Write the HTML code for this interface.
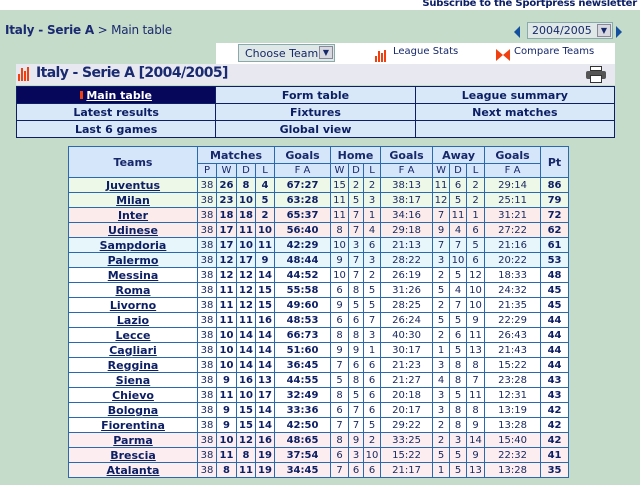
<!DOCTYPE html>
<html><head><meta charset="utf-8">
<style>
*{margin:0;padding:0;box-sizing:border-box}
body{width:640px;height:485px;background:#c6dccb;font-family:"DejaVu Sans","Liberation Sans",sans-serif;color:#16286a;position:relative;overflow:hidden}
.top{position:absolute;left:0;top:0;width:640px;height:10px;background:#fff}
.sub{position:absolute;right:3px;top:-2px;font-size:10px;font-weight:bold;color:#0c1e64;white-space:nowrap;letter-spacing:-0.2px}
.bc{position:absolute;left:5px;top:23px;font-size:12px;color:#1a2a6a;letter-spacing:-0.2px}
.bc b{color:#1a2a70}
.yr{position:absolute;left:527px;top:22px;width:86px;height:17px;border:1px solid #8aa;background:#dfe8e6;font-size:11px;padding:1px 4px}
.yr i,.ct i{position:absolute;right:1px;top:1px;width:14px;height:13px;background:#d8d8e0;border:1px solid #889;font-style:normal;font-size:8px;text-align:center;line-height:12px}
.arl{position:absolute;left:514px;top:26px;width:0;height:0;border-top:6px solid transparent;border-bottom:6px solid transparent;border-right:6px solid #1450a0}
.arr{position:absolute;left:616px;top:26px;width:0;height:0;border-top:6px solid transparent;border-bottom:6px solid transparent;border-left:6px solid #1450a0}
.tabs{position:absolute;left:216px;top:43px;width:399px;height:21px;background:#fff}
.ct{position:absolute;left:238px;top:44px;width:97px;height:18px;border:1px solid #8aa;background:#dfe8e6;font-size:11px;padding:2px 6px}
.title{position:absolute;left:16px;top:64px;width:599px;height:21px;background:#e8e8f0}
.title span{position:absolute;left:20px;top:1px;font-size:14px;font-weight:bold;color:#1a2a70;letter-spacing:-0.6px}
.bars{position:absolute;display:flex;align-items:flex-end;gap:1px}
.bars b{display:block;width:2px;background:#f04010}
.menu{position:absolute;left:16px;top:86px;width:599px;border-collapse:collapse;table-layout:fixed}
.menu td{border:1px solid #0c1e64;background:#d8e8f8;height:17px;font-size:11px;font-weight:bold;text-align:center;color:#0c1e64}
.menu td.on{background:#06065a;color:#fff;text-decoration:underline}
.t{position:absolute;left:68px;top:146px;width:500px;border-collapse:collapse;table-layout:fixed}
.t td,.t th{border:1px solid #2a68b0;font-size:10px;text-align:center;height:15px;line-height:13px;padding:0;white-space:nowrap;overflow:hidden}
.t th{background:#d6e6fa;font-weight:bold;font-size:11px;color:#16286a}
.t tr.h1 th{height:17px}
.t tr.h2 th{font-weight:normal;font-size:10px;height:14px}
.t td{color:#1a2a60}
.t td.n{font-weight:bold;text-decoration:underline;font-size:11px;color:#0c1e64}
.t td.b{font-weight:bold;color:#0c1e64}
.t tr.g td{background:#eef8e8}
.t tr.p td{background:#fbeceb}
.t tr.c td{background:#e6f6fa}
.t tr.w td{background:#fff}
.t tr.q td{background:#fcedf0}
</style></head><body>
<div class="top"><div class="sub">Subscribe to the Sportpress newsletter</div></div>
<div class="bc"><b>Italy - Serie A</b> &gt; Main table</div>
<div class="arl"></div>
<div class="yr">2004/2005<i>&#9660;</i></div>
<div class="arr"></div>
<div class="tabs"></div>
<div class="ct">Choose Team<i>&#9660;</i></div>
<div class="bars" style="left:375px;top:50px;height:12px"><b style="height:6px"></b><b style="height:11px"></b><b style="height:9px"></b><b style="height:12px"></b></div>
<div style="position:absolute;left:393px;top:46px;font-size:10px">League Stats</div>
<div style="position:absolute;left:496px;top:49px;width:0;height:0;border-top:6px solid transparent;border-bottom:6px solid transparent;border-left:7px solid #f04010"></div>
<div style="position:absolute;left:503px;top:49px;width:0;height:0;border-top:6px solid transparent;border-bottom:6px solid transparent;border-right:7px solid #f04010"></div>
<div style="position:absolute;left:514px;top:46px;font-size:10px">Compare Teams</div>
<div class="title"><span>Italy - Serie A [2004/2005]</span>
<div class="bars" style="left:2px;top:3px;height:14px"><b style="height:7px"></b><b style="height:13px"></b><b style="height:10px"></b><b style="height:14px"></b></div>
<div style="position:absolute;left:570px;top:2px;width:20px;height:17px"><div style="position:absolute;left:4px;top:0;width:12px;height:5px;border:1px solid #333;background:#fff"></div><div style="position:absolute;left:0;top:5px;width:20px;height:8px;background:#555;border-radius:2px"></div><div style="position:absolute;left:4px;top:9px;width:12px;height:8px;border:1px solid #333;background:#fff"></div></div>
</div>
<table class="menu"><tr><td class="on"><span style="display:inline-block;width:3px;height:8px;background:#f04010;margin-right:3px"></span>Main table</td><td>Form table</td><td>League summary</td></tr>
<tr><td>Latest results</td><td>Fixtures</td><td>Next matches</td></tr>
<tr><td>Last 6 games</td><td>Global view</td><td></td></tr></table>
<table class="t">
<colgroup><col style="width:129px"><col style="width:19px"><col style="width:20px"><col style="width:19px"><col style="width:19px"><col style="width:56px"><col style="width:18px"><col style="width:15px"><col style="width:17px"><col style="width:52px"><col style="width:17px"><col style="width:17px"><col style="width:18px"><col style="width:56px"><col style="width:28px"></colgroup>
<tr class="h1"><th rowspan="2">Teams</th><th colspan="4">Matches</th><th>Goals</th><th colspan="3">Home</th><th>Goals</th><th colspan="3">Away</th><th>Goals</th><th rowspan="2">Pt</th></tr>
<tr class="h2"><th>P</th><th>W</th><th>D</th><th>L</th><th>F A</th><th>W</th><th>D</th><th>L</th><th>F A</th><th>W</th><th>D</th><th>L</th><th>F A</th></tr>
<tr class="g"><td class="n">Juventus</td><td>38</td><td class="b">26</td><td class="b">8</td><td class="b">4</td><td class="b">67:27</td><td>15</td><td>2</td><td>2</td><td>38:13</td><td>11</td><td>6</td><td>2</td><td>29:14</td><td class="b">86</td></tr>
<tr class="g"><td class="n">Milan</td><td>38</td><td class="b">23</td><td class="b">10</td><td class="b">5</td><td class="b">63:28</td><td>11</td><td>5</td><td>3</td><td>38:17</td><td>12</td><td>5</td><td>2</td><td>25:11</td><td class="b">79</td></tr>
<tr class="p"><td class="n">Inter</td><td>38</td><td class="b">18</td><td class="b">18</td><td class="b">2</td><td class="b">65:37</td><td>11</td><td>7</td><td>1</td><td>34:16</td><td>7</td><td>11</td><td>1</td><td>31:21</td><td class="b">72</td></tr>
<tr class="p"><td class="n">Udinese</td><td>38</td><td class="b">17</td><td class="b">11</td><td class="b">10</td><td class="b">56:40</td><td>8</td><td>7</td><td>4</td><td>29:18</td><td>9</td><td>4</td><td>6</td><td>27:22</td><td class="b">62</td></tr>
<tr class="c"><td class="n">Sampdoria</td><td>38</td><td class="b">17</td><td class="b">10</td><td class="b">11</td><td class="b">42:29</td><td>10</td><td>3</td><td>6</td><td>21:13</td><td>7</td><td>7</td><td>5</td><td>21:16</td><td class="b">61</td></tr>
<tr class="c"><td class="n">Palermo</td><td>38</td><td class="b">12</td><td class="b">17</td><td class="b">9</td><td class="b">48:44</td><td>9</td><td>7</td><td>3</td><td>28:22</td><td>3</td><td>10</td><td>6</td><td>20:22</td><td class="b">53</td></tr>
<tr class="w"><td class="n">Messina</td><td>38</td><td class="b">12</td><td class="b">12</td><td class="b">14</td><td class="b">44:52</td><td>10</td><td>7</td><td>2</td><td>26:19</td><td>2</td><td>5</td><td>12</td><td>18:33</td><td class="b">48</td></tr>
<tr class="w"><td class="n">Roma</td><td>38</td><td class="b">11</td><td class="b">12</td><td class="b">15</td><td class="b">55:58</td><td>6</td><td>8</td><td>5</td><td>31:26</td><td>5</td><td>4</td><td>10</td><td>24:32</td><td class="b">45</td></tr>
<tr class="w"><td class="n">Livorno</td><td>38</td><td class="b">11</td><td class="b">12</td><td class="b">15</td><td class="b">49:60</td><td>9</td><td>5</td><td>5</td><td>28:25</td><td>2</td><td>7</td><td>10</td><td>21:35</td><td class="b">45</td></tr>
<tr class="w"><td class="n">Lazio</td><td>38</td><td class="b">11</td><td class="b">11</td><td class="b">16</td><td class="b">48:53</td><td>6</td><td>6</td><td>7</td><td>26:24</td><td>5</td><td>5</td><td>9</td><td>22:29</td><td class="b">44</td></tr>
<tr class="w"><td class="n">Lecce</td><td>38</td><td class="b">10</td><td class="b">14</td><td class="b">14</td><td class="b">66:73</td><td>8</td><td>8</td><td>3</td><td>40:30</td><td>2</td><td>6</td><td>11</td><td>26:43</td><td class="b">44</td></tr>
<tr class="w"><td class="n">Cagliari</td><td>38</td><td class="b">10</td><td class="b">14</td><td class="b">14</td><td class="b">51:60</td><td>9</td><td>9</td><td>1</td><td>30:17</td><td>1</td><td>5</td><td>13</td><td>21:43</td><td class="b">44</td></tr>
<tr class="w"><td class="n">Reggina</td><td>38</td><td class="b">10</td><td class="b">14</td><td class="b">14</td><td class="b">36:45</td><td>7</td><td>6</td><td>6</td><td>21:23</td><td>3</td><td>8</td><td>8</td><td>15:22</td><td class="b">44</td></tr>
<tr class="w"><td class="n">Siena</td><td>38</td><td class="b">9</td><td class="b">16</td><td class="b">13</td><td class="b">44:55</td><td>5</td><td>8</td><td>6</td><td>21:27</td><td>4</td><td>8</td><td>7</td><td>23:28</td><td class="b">43</td></tr>
<tr class="w"><td class="n">Chievo</td><td>38</td><td class="b">11</td><td class="b">10</td><td class="b">17</td><td class="b">32:49</td><td>8</td><td>5</td><td>6</td><td>20:18</td><td>3</td><td>5</td><td>11</td><td>12:31</td><td class="b">43</td></tr>
<tr class="w"><td class="n">Bologna</td><td>38</td><td class="b">9</td><td class="b">15</td><td class="b">14</td><td class="b">33:36</td><td>6</td><td>7</td><td>6</td><td>20:17</td><td>3</td><td>8</td><td>8</td><td>13:19</td><td class="b">42</td></tr>
<tr class="w"><td class="n">Fiorentina</td><td>38</td><td class="b">9</td><td class="b">15</td><td class="b">14</td><td class="b">42:50</td><td>7</td><td>7</td><td>5</td><td>29:22</td><td>2</td><td>8</td><td>9</td><td>13:28</td><td class="b">42</td></tr>
<tr class="q"><td class="n">Parma</td><td>38</td><td class="b">10</td><td class="b">12</td><td class="b">16</td><td class="b">48:65</td><td>8</td><td>9</td><td>2</td><td>33:25</td><td>2</td><td>3</td><td>14</td><td>15:40</td><td class="b">42</td></tr>
<tr class="q"><td class="n">Brescia</td><td>38</td><td class="b">11</td><td class="b">8</td><td class="b">19</td><td class="b">37:54</td><td>6</td><td>3</td><td>10</td><td>15:22</td><td>5</td><td>5</td><td>9</td><td>22:32</td><td class="b">41</td></tr>
<tr class="q"><td class="n">Atalanta</td><td>38</td><td class="b">8</td><td class="b">11</td><td class="b">19</td><td class="b">34:45</td><td>7</td><td>6</td><td>6</td><td>21:17</td><td>1</td><td>5</td><td>13</td><td>13:28</td><td class="b">35</td></tr>
</table>
</body></html>
